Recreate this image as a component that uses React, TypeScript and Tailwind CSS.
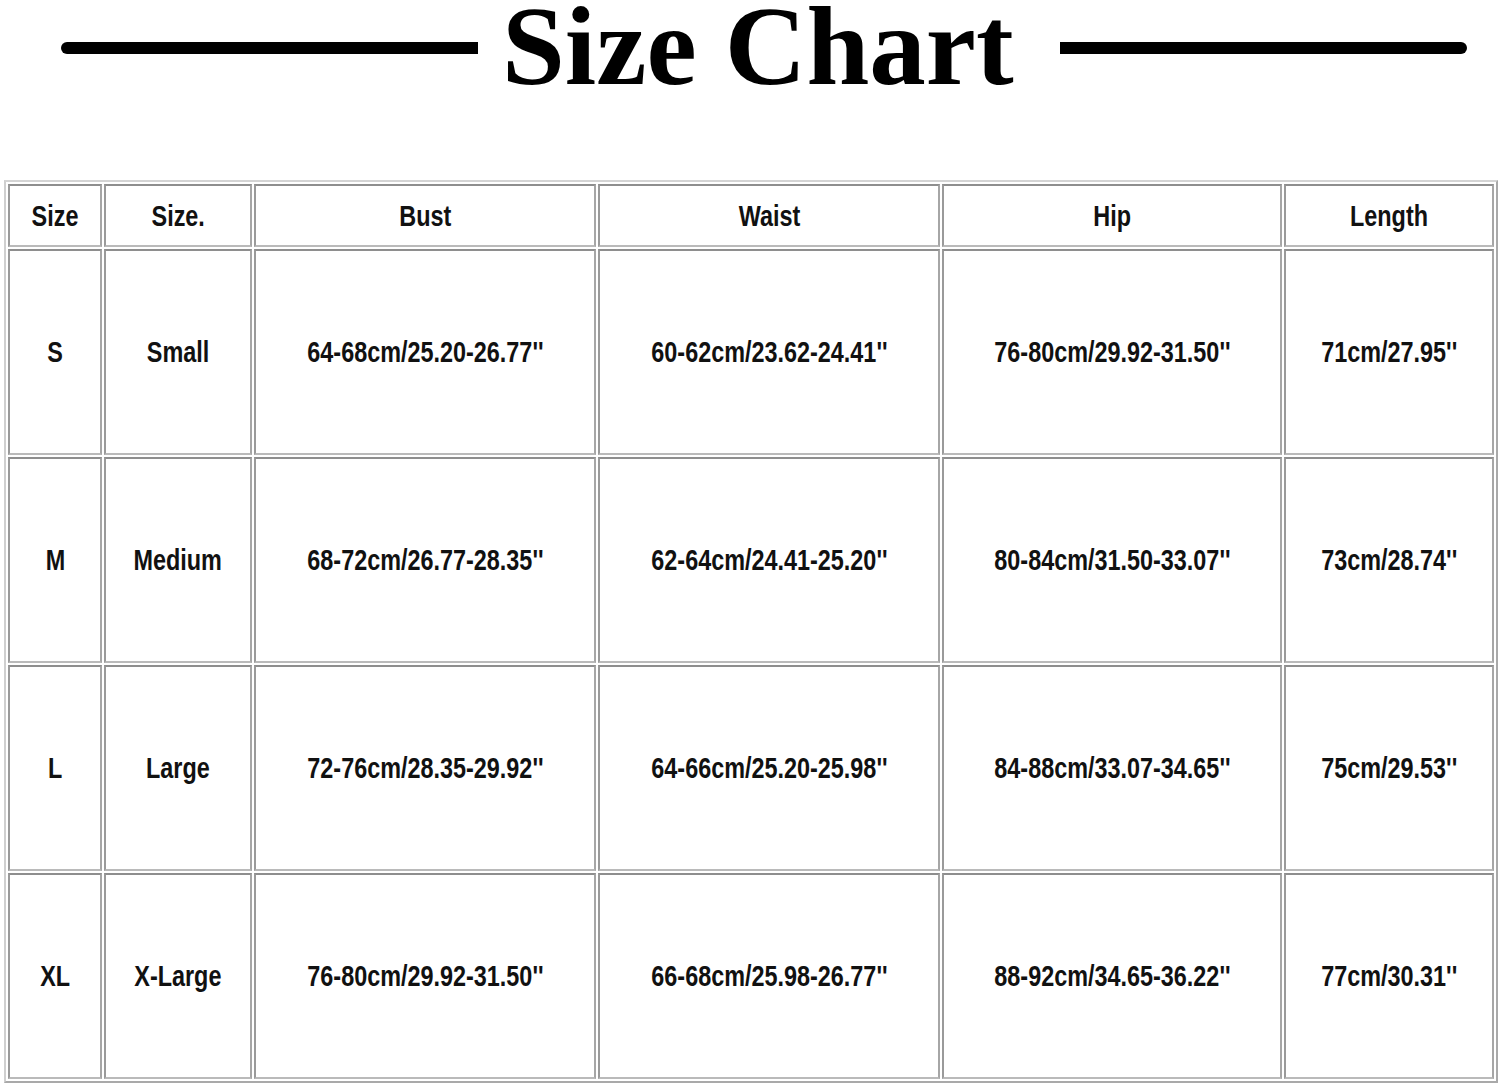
const headers = ["Size", "Size.", "Bust", "Waist", "Hip", "Length"];

const rows = [
  ["S", "Small", "64-68cm/25.20-26.77''", "60-62cm/23.62-24.41''", "76-80cm/29.92-31.50''", "71cm/27.95''"],
  ["M", "Medium", "68-72cm/26.77-28.35''", "62-64cm/24.41-25.20''", "80-84cm/31.50-33.07''", "73cm/28.74''"],
  ["L", "Large", "72-76cm/28.35-29.92''", "64-66cm/25.20-25.98''", "84-88cm/33.07-34.65''", "75cm/29.53''"],
  ["XL", "X-Large", "76-80cm/29.92-31.50''", "66-68cm/25.98-26.77''", "88-92cm/34.65-36.22''", "77cm/30.31''"],
];

function Cell({ text, tall }: { text: string; tall?: boolean }) {
  return (
    <div
      className={`flex items-center justify-center border-2 border-t-[#8e8e8e] border-l-[#9a9a9a] border-r-[#a6a6a6] border-b-[#bababa] bg-white ${
        tall ? "h-[206px]" : "h-[63px]"
      }`}
    >
      <span className="inline-block scale-x-[0.78] whitespace-nowrap font-['Liberation_Sans',Arial,sans-serif] text-[30px] font-bold leading-none text-[#111]">
        {text}
      </span>
    </div>
  );
}

export default function App() {
  return (
    <div className="h-[1087px] w-[1500px] overflow-hidden bg-white">
      {/* title */}
      <div className="flex h-[96px] items-center">
        <div className="ml-[61px] h-[12px] w-[417px] rounded-l-full bg-black" />
        <h1 className="-mt-[6px] ml-[24px] whitespace-nowrap font-['Liberation_Serif','Times_New_Roman',serif] text-[113px] font-bold leading-none text-black">
          Size Chart
        </h1>
        <div className="ml-[46px] h-[12px] w-[407px] rounded-r-full bg-black" />
      </div>

      {/* table */}
      <div className="ml-[4px] mt-[84px] w-[1494px] border-2 border-t-[#d4d4d4] border-l-[#cfcfcf] border-r-[#a9a9a9] border-b-[#a9a9a9] p-[2px]">
        <div className="grid grid-cols-[94px_148px_342px_342px_340px_210px] gap-[2px]">
          {headers.map((h) => (
            <Cell key={h} text={h} />
          ))}
          {rows.map((row) =>
            row.map((v, i) => <Cell key={row[0] + i} text={v} tall />)
          )}
        </div>
      </div>
    </div>
  );
}
